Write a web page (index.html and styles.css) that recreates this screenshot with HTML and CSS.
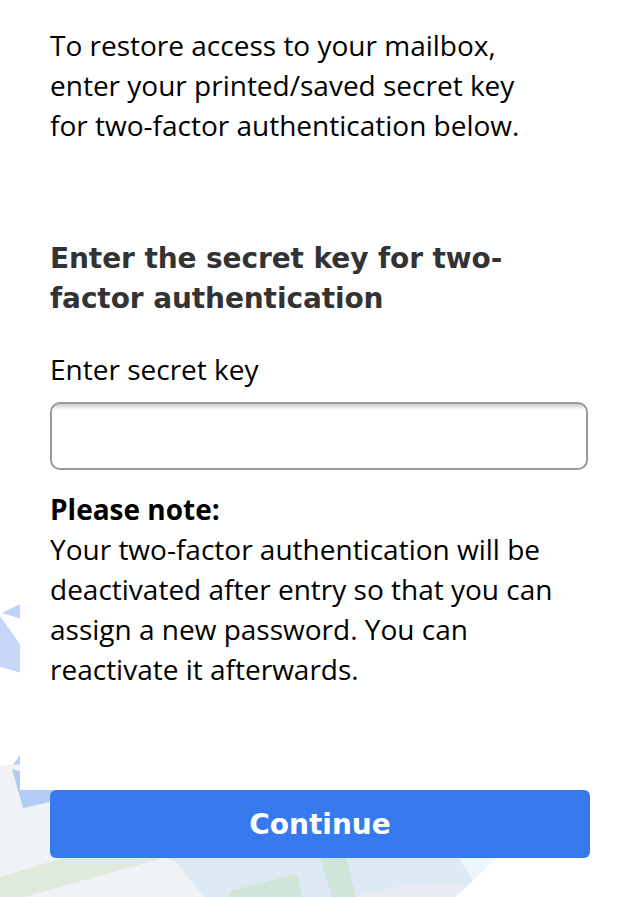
FILE: index.html
```html
<!DOCTYPE html>
<html lang="en">
<head>
    <meta charset="UTF-8">
    <meta name="viewport" content="width=device-width, initial-scale=1.0">
    <title>Restore access</title>
    <link rel="stylesheet" href="styles.css">
</head>
<body>
    <svg class="backdrop" viewBox="0 0 640 897" aria-hidden="true">
        <!-- pale sheets -->
        <path fill="#eff3f6" d="M0 766L20 764L60 785H420L480 897H0Z"/>
        <path fill="#deeaf3" d="M150 850H455L473 881L455 897H204L176 862Z"/>
        <path fill="#e5eaf3" d="M350 897L400 886L462 884L478 897Z"/>
        <path fill="#eef5fc" d="M455 850H505L473 881Z"/>
        <path fill="#fff" d="M505 850H640V897H455L473 881Z"/>
        <!-- green stripes -->
        <path fill="#dfeadd" d="M0 877L70 856H170L24 897H0Z"/>
        <path fill="#d0e5da" d="M230 891L297 874L302 897H230Z"/>
        <path fill="#d0e5da" d="M318 850H344L356 897H332Z"/>
        <!-- blue ribbons -->
        <path fill="#bfd2f8" d="M2 613L22 603V619Z"/>
        <path fill="#c8d6fa" d="M0 616L22 647V673L0 667Z"/>
        <path fill="#b8cff6" d="M13 765L22 752V764Z"/>
        <path fill="#b4ccf5" d="M12 769L22 772V788H54V801L23 808Z"/>
    </svg>
    <div class="container">
        <section class="content">
            <p class="intro">To restore access to your mailbox,<br>enter your printed/saved secret key<br>for two-factor authentication below.</p>
            <h2>Enter the secret key for two-<br>factor authentication</h2>
            <label for="secretKey">Enter secret key</label>
            <input type="text" id="secretKey" form="keyForm">
            <p class="note"><strong>Please note:</strong><br>Your two-factor authentication will be<br>deactivated after entry so that you can<br>assign a new password. You can<br>reactivate it afterwards.</p>
        </section>
        <form id="keyForm">
            <button type="submit">Continue</button>
        </form>
    </div>
</body>
</html>
```

FILE: styles.css
```css
* {
    box-sizing: border-box;
}
body {
    font-family: "Open Sans", sans-serif;
    font-size: 28px;
    line-height: 40px;
    background-color: #fff;
    color: #000;
    margin: 0;
    height: 897px;
    overflow: hidden;
}
/* decoration behind the page */
.backdrop {
    position: absolute;
    top: 0;
    left: 0;
    width: 640px;
    height: 897px;
    filter: blur(0.6px);
}
.container {
    position: relative;
    margin: 0 20px;
}
.content {
    height: 790px;
    padding: 25px 30px 0;
    background-color: #fff;
}
p {
    margin: 0;
}
h2 {
    margin: 94px 0 30px;
    font-family: Verdana, "DejaVu Sans", sans-serif;
    font-size: 28px;
    line-height: 40px;
    letter-spacing: -0.1px;
    color: #333;
}
label {
    display: block;
}
input {
    display: block;
    width: 538px;
    height: 68px;
    margin: 13px 0 19px;
    padding: 0 16px;
    border: 2px solid #999;
    border-radius: 10px;
    background: linear-gradient(#ccc, #fff 6px);
    font: inherit;
}
form {
    padding: 0 30px;
}
button {
    display: block;
    width: 100%;
    height: 68px;
    padding: 0;
    border: none;
    border-radius: 6px;
    background-color: #377aee;
    color: #fff;
    font-family: Verdana, "DejaVu Sans", sans-serif;
    font-size: 28px;
    font-weight: bold;
    cursor: pointer;
}
```
